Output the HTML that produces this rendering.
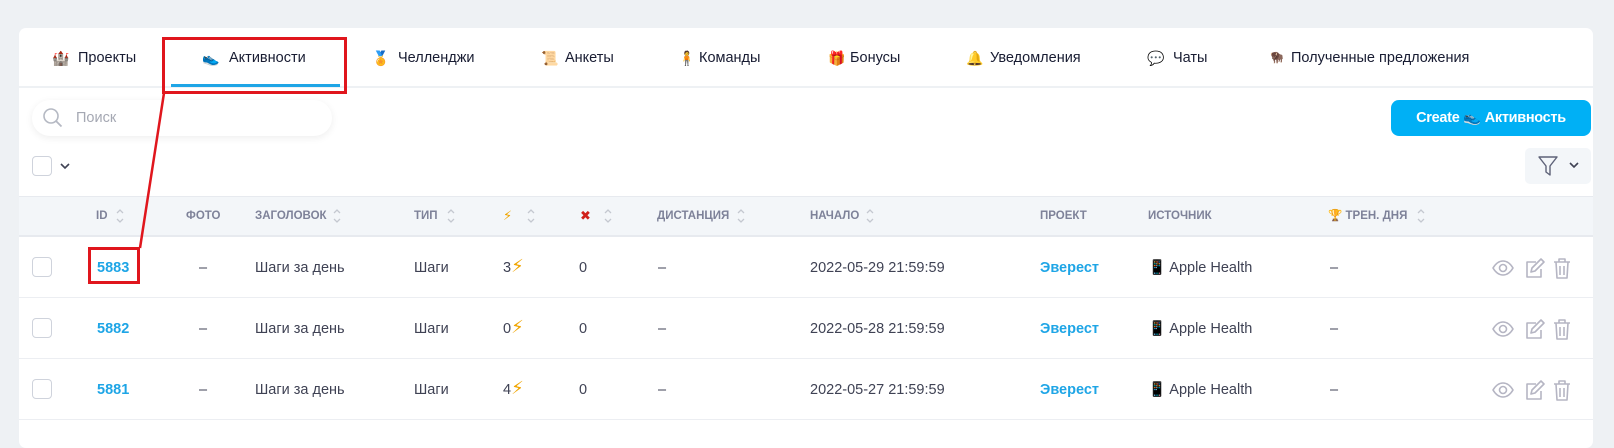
<!DOCTYPE html>
<html><head><meta charset="utf-8"><style>
*{box-sizing:border-box;margin:0;padding:0}
body{width:1614px;height:437px;background:#eef1f4;font-family:"Liberation Sans","DejaVu Sans",sans-serif;color:#3f4254;overflow:hidden;position:relative}
.card{position:absolute;left:19px;top:28px;width:1574px;height:420px;background:#fff;border-radius:7px}
.a{position:absolute;white-space:nowrap}
.tab{position:absolute;top:49px;font-size:14.5px;color:#181c32;white-space:nowrap;line-height:18px}
.ic{position:absolute;top:49px;font-size:14px;line-height:18px}
.h{position:absolute;top:209px;font-size:11.5px;font-weight:bold;color:#7e8299;white-space:nowrap;line-height:14px}
.c{position:absolute;font-size:14.5px;color:#3f4254;white-space:nowrap;line-height:18px}
.link{color:#1ea5e6;font-weight:bold}
.z{color:#f0a500;font-size:18px;line-height:14px}
.cb{position:absolute;width:20px;height:20px;border:1px solid #cfd3dc;border-radius:4px;background:#fff}
.red{position:absolute;border:3px solid #e0161d}
.line{position:absolute;left:19px;width:1574px;height:1px;background:#eceef2}
</style></head><body>
<div class="card"></div>
<span class="ic" style="left:52px">🏰</span><span class="tab" style="left:78px">Проекты</span>
<span class="ic" style="left:202px">👟</span><span class="tab" style="left:229px">Активности</span>
<span class="ic" style="left:372px">🏅</span><span class="tab" style="left:398px">Челленджи</span>
<span class="ic" style="left:541px">📜</span><span class="tab" style="left:565px">Анкеты</span>
<span class="ic" style="left:678px">🧍</span><span class="tab" style="left:699px">Команды</span>
<span class="ic" style="left:828px">🎁</span><span class="tab" style="left:850px">Бонусы</span>
<span class="ic" style="left:966px">🔔</span><span class="tab" style="left:990px">Уведомления</span>
<span class="ic" style="left:1147px">💬</span><span class="tab" style="left:1173px">Чаты</span>
<span class="ic" style="left:1270px;font-size:11px">🦬</span><span class="tab" style="left:1291px">Полученные предложения</span>
<div style="position:absolute;left:19px;top:86px;width:1574px;height:2px;background:#eef1f4"></div>
<div style="position:absolute;left:171px;top:84px;width:169px;height:3px;background:#1ea5e6"></div>
<div style="position:absolute;left:32px;top:100px;width:300px;height:36px;border-radius:18px;box-shadow:0 2px 8px rgba(0,0,0,.07);background:#fff"></div>
<svg style="position:absolute;left:42px;top:107px" width="22" height="22" viewBox="0 0 22 22"><circle cx="9" cy="9" r="7" fill="none" stroke="#b5b9c3" stroke-width="1.6"/><path d="M14 14l5.5 5.5" stroke="#b5b9c3" stroke-width="1.8"/></svg>
<span class="c" style="left:76px;top:109px;color:#a5a8b3">Поиск</span>
<div style="position:absolute;left:1391px;top:100px;width:200px;height:36px;border-radius:8px;background:#00b0f5;color:#fff;font-weight:bold;font-size:14.5px;text-align:center;line-height:36px;letter-spacing:-0.3px">Create 👟 Активность</div>
<div class="cb" style="left:32px;top:156px"></div>
<svg style="position:absolute;left:60px;top:162px" width="10" height="8"><path d="M1 2l4 4 4-4" fill="none" stroke="#3f4254" stroke-width="1.6"/></svg>
<div style="position:absolute;left:1525px;top:148px;width:66px;height:36px;border-radius:5px;background:#f3f6f9"></div>
<svg style="position:absolute;left:1537px;top:154px" width="22" height="24" viewBox="0 0 22 24"><path d="M2 3h18l-7 9v9l-4-3v-6z" fill="none" stroke="#5e6278" stroke-width="1.4" stroke-linejoin="round"/></svg>
<svg style="position:absolute;left:1569px;top:162px" width="10" height="8"><path d="M1 1l4 4 4-4" fill="none" stroke="#3f4254" stroke-width="1.6"/></svg>
<div style="position:absolute;left:19px;top:196px;width:1574px;height:41px;background:#f3f6f9;border-top:1px solid #e7eaef;border-bottom:2px solid #e7eaef"></div>
<svg width="0" height="0" style="position:absolute"><defs><g id="s"><path d="M1 5l3-3 3 3M1 11l3 3 3-3" fill="none" stroke="#c4c8d0" stroke-width="1.3"/></g></defs></svg>
<span class="h" style="left:96px">ID</span><svg class="a" style="left:116px;top:208px" width="8" height="16"><use href="#s"/></svg>
<span class="h" style="left:186px">ФОТО</span>
<span class="h" style="left:255px">ЗАГОЛОВОК</span><svg class="a" style="left:333px;top:208px" width="8" height="16"><use href="#s"/></svg>
<span class="h" style="left:414px">ТИП</span><svg class="a" style="left:447px;top:208px" width="8" height="16"><use href="#s"/></svg>
<span class="h" style="left:503px;color:#f0a500;font-size:13px">⚡</span><svg class="a" style="left:527px;top:208px" width="8" height="16"><use href="#s"/></svg>
<span class="h" style="left:580px;color:#d0201a;font-size:13px">✖</span><svg class="a" style="left:604px;top:208px" width="8" height="16"><use href="#s"/></svg>
<span class="h" style="left:657px">ДИСТАНЦИЯ</span><svg class="a" style="left:737px;top:208px" width="8" height="16"><use href="#s"/></svg>
<span class="h" style="left:810px">НАЧАЛО</span><svg class="a" style="left:866px;top:208px" width="8" height="16"><use href="#s"/></svg>
<span class="h" style="left:1040px">ПРОЕКТ</span>
<span class="h" style="left:1148px">ИСТОЧНИК</span>
<span class="h" style="left:1328px">🏆 ТРЕН. ДНЯ</span><svg class="a" style="left:1417px;top:208px" width="8" height="16"><use href="#s"/></svg>
<div class="line" style="top:297px"></div><div class="line" style="top:358px"></div><div class="line" style="top:419px"></div>

<div class="cb" style="left:32px;top:257px"></div><span class="c link" style="left:97px;top:259px">5883</span><span class="c" style="left:199px;top:259px">–</span><span class="c" style="left:255px;top:259px">Шаги за день</span><span class="c" style="left:414px;top:259px">Шаги</span><span class="c" style="left:503px;top:259px">3<span class="z">⚡</span></span><span class="c" style="left:579px;top:259px">0</span><span class="c" style="left:658px;top:259px">–</span><span class="c" style="left:810px;top:259px">2022-05-29 21:59:59</span><span class="c link" style="left:1040px;top:259px">Эверест</span><span class="c" style="left:1148px;top:259px">📱 Apple Health</span><span class="c" style="left:1330px;top:259px">–</span>
<div class="cb" style="left:32px;top:318px"></div><span class="c link" style="left:97px;top:320px">5882</span><span class="c" style="left:199px;top:320px">–</span><span class="c" style="left:255px;top:320px">Шаги за день</span><span class="c" style="left:414px;top:320px">Шаги</span><span class="c" style="left:503px;top:320px">0<span class="z">⚡</span></span><span class="c" style="left:579px;top:320px">0</span><span class="c" style="left:658px;top:320px">–</span><span class="c" style="left:810px;top:320px">2022-05-28 21:59:59</span><span class="c link" style="left:1040px;top:320px">Эверест</span><span class="c" style="left:1148px;top:320px">📱 Apple Health</span><span class="c" style="left:1330px;top:320px">–</span>
<div class="cb" style="left:32px;top:379px"></div><span class="c link" style="left:97px;top:381px">5881</span><span class="c" style="left:199px;top:381px">–</span><span class="c" style="left:255px;top:381px">Шаги за день</span><span class="c" style="left:414px;top:381px">Шаги</span><span class="c" style="left:503px;top:381px">4<span class="z">⚡</span></span><span class="c" style="left:579px;top:381px">0</span><span class="c" style="left:658px;top:381px">–</span><span class="c" style="left:810px;top:381px">2022-05-27 21:59:59</span><span class="c link" style="left:1040px;top:381px">Эверест</span><span class="c" style="left:1148px;top:381px">📱 Apple Health</span><span class="c" style="left:1330px;top:381px">–</span>

<svg width="0" height="0" style="position:absolute"><defs><g id="acts" fill="none" stroke="#b5b5c3" stroke-width="1.6" stroke-linejoin="round">
<path d="M1 11c3-5 6-7 10-7s7 2 10 7c-3 5-6 7-10 7s-7-2-10-7z"/><circle cx="11" cy="11" r="3.5"/>
<path d="M44 5h-9v15h14v-8"/><path d="M39 15l1-4 9-9 3 3-9 9z"/>
<path d="M62 5h16M67 5V2h6v3M64 5l1 16h10l1-16M68 9v9M72 9v9"/></g></defs></svg>
<svg class="a" style="left:1492px;top:257px" width="80" height="24"><use href="#acts"/></svg>
<svg class="a" style="left:1492px;top:318px" width="80" height="24"><use href="#acts"/></svg>
<svg class="a" style="left:1492px;top:379px" width="80" height="24"><use href="#acts"/></svg>

<div class="red" style="left:162px;top:37px;width:185px;height:57px"></div>
<div class="red" style="left:88px;top:247px;width:52px;height:37px"></div>
<svg style="position:absolute;left:0;top:0" width="1614" height="437"><path d="M164 93L140 248" stroke="#e0161d" stroke-width="2.5"/></svg>
</body></html>
